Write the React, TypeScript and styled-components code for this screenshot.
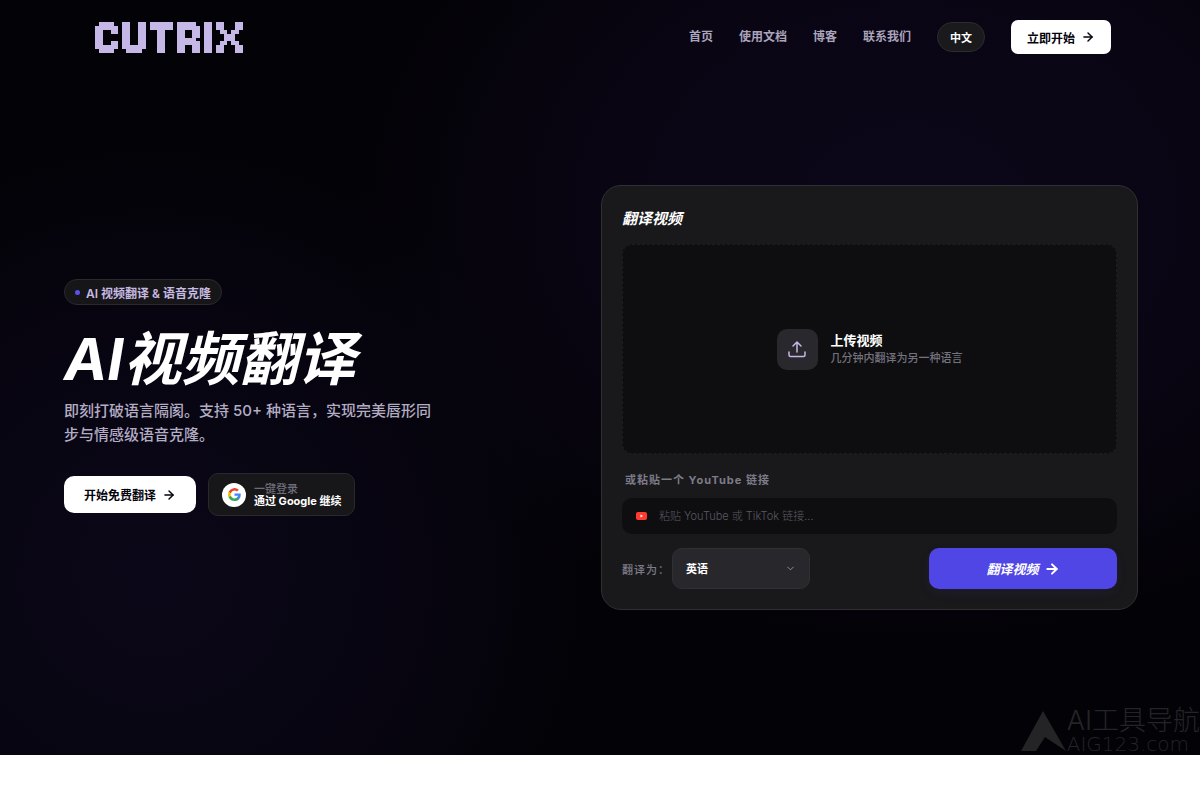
import React from "react";
import styled, { createGlobalStyle, css } from "styled-components";
import { ArrowRight, ChevronDown } from "lucide-react";

const GlobalStyle = createGlobalStyle`
  *, *::before, *::after { box-sizing: border-box; }
  body {
    margin: 0;
    background: #ffffff;
    color: #ffffff;
    font-family: Inter, "Noto Sans CJK SC", sans-serif;
    -webkit-font-smoothing: antialiased;
  }
  button, input, select { font-family: inherit; }
  h1, h2, p { margin: 0; }
`;

const Hero = styled.div`
  position: relative;
  overflow: hidden;
  background:
    radial-gradient(ellipse 560px 440px at 76% 28%, #0b0719 0%, #090513 55%, transparent 100%),
    radial-gradient(circle 440px at 13% 76%, #0b0718 0%, #080512 50%, transparent 100%),
    #030206;
`;

const Header = styled.header`
  display: flex;
  align-items: center;
  justify-content: space-between;
  height: 74px;
  padding: 0 89px 0 95px;
`;

const LogoLink = styled.a`
  display: block;
  line-height: 0;
`;

const Nav = styled.nav`
  display: flex;
  align-items: center;
  gap: 26px;
`;

const NavLink = styled.a`
  color: #aaa4bc;
  font-size: 12px;
  font-weight: 600;
  line-height: 20px;
  text-decoration: none;
`;

const LanguageButton = styled.button`
  height: 30px;
  padding: 0 12px;
  border: 1px solid #2c2c2f;
  border-radius: 15px;
  background: #1a1a1c;
  color: #ffffff;
  font-size: 11px;
  font-weight: 700;
`;

const LightButton = styled.button<{ $large?: boolean }>`
  display: flex;
  align-items: center;
  gap: 6px;
  height: ${(p) => (p.$large ? 37 : 34)}px;
  padding: 0 ${(p) => (p.$large ? 20 : 16)}px;
  border: 0;
  border-radius: ${(p) => (p.$large ? 10 : 7)}px;
  background: #ffffff;
  color: #05030b;
  font-size: 12px;
  font-weight: 600;
  white-space: nowrap;
`;

const Main = styled.main`
  display: grid;
  grid-template-columns: 1fr 1fr;
  align-items: center;
  padding: 111px 62px 145px 64px;
`;

const Intro = styled.section`
  display: flex;
  flex-direction: column;
  align-items: flex-start;
`;

const Badge = styled.p`
  display: flex;
  align-items: center;
  gap: 6px;
  height: 26px;
  padding: 0 10px;
  border: 1px solid #2a2a2d;
  border-radius: 13px;
  background: #161618;
  color: #c6bbe2;
  font-size: 12px;
  font-weight: 600;
`;

const Dot = styled.span`
  width: 5px;
  height: 5px;
  border-radius: 50%;
  background: #5b4ff0;
`;

const Headline = styled.h1`
  margin-top: 22px;
  font-size: 58px;
  font-style: italic;
  font-weight: 700;
  line-height: 64px;
  white-space: nowrap;
`;

const Lead = styled.p`
  max-width: 372px;
  margin-top: 8px;
  color: #b3adc4;
  font-size: 15px;
  font-weight: 500;
  line-height: 24px;
`;

const Actions = styled.div`
  display: flex;
  align-items: center;
  gap: 12px;
  margin-top: 26px;
`;

const GoogleButton = styled.button`
  display: flex;
  align-items: center;
  gap: 8px;
  height: 43px;
  padding: 0 13px;
  border: 1px solid #29292c;
  border-radius: 10px;
  background: #171719;
  color: #ffffff;
  text-align: left;
`;

const GoogleDisc = styled.span`
  display: grid;
  place-items: center;
  width: 24px;
  height: 24px;
  border-radius: 50%;
  background: #ffffff;
`;

const GoogleText = styled.span`
  display: flex;
  flex-direction: column;
  font-size: 11px;
  font-weight: 700;
  line-height: 12px;
  white-space: nowrap;
`;

const Faint = styled.span`
  color: #6e6c78;
  font-weight: 500;
`;

const Card = styled.form`
  padding: 20px;
  border: 1px solid #303033;
  border-radius: 20px;
  background: #19191b;
`;

const CardTitle = styled.h2`
  font-size: 15px;
  font-style: italic;
  font-weight: 700;
  line-height: 26px;
`;

const hiddenControl = css`
  position: absolute;
  width: 1px;
  height: 1px;
  opacity: 0;
`;

const DropZone = styled.label`
  position: relative;
  display: flex;
  align-items: center;
  justify-content: center;
  gap: 13px;
  height: 210px;
  margin-top: 12px;
  border: 1px dashed #1e1e21;
  border-radius: 10px;
  background: #0e0e10;
`;

const FileInput = styled.input`
  ${hiddenControl}
`;

const UploadTile = styled.span`
  display: grid;
  place-items: center;
  width: 41px;
  height: 41px;
  border-radius: 10px;
  background: #29292d;
`;

const UploadText = styled.span`
  display: flex;
  flex-direction: column;
  color: #74727e;
  font-size: 11px;
  font-weight: 500;
  line-height: 18px;
`;

const UploadTitle = styled.strong`
  color: #ffffff;
  font-size: 13px;
  font-weight: 700;
`;

const LinkLabel = styled.label`
  display: block;
  margin: 16px 0 8px 3px;
  color: #7e7b89;
  font-size: 11px;
  font-weight: 700;
  line-height: 20px;
  letter-spacing: 1px;
`;

const LinkField = styled.div`
  display: flex;
  align-items: center;
  gap: 12px;
  height: 36px;
  padding: 0 14px;
  border-radius: 10px;
  background: #0e0e10;
`;

const LinkInput = styled.input`
  flex: 1;
  min-width: 0;
  padding: 0;
  border: 0;
  outline: 0;
  background: transparent;
  color: #ffffff;
  font-size: 11px;
  font-weight: 300;
  &::placeholder { color: #5a5962; opacity: 1; }
`;

const SubmitRow = styled.div`
  display: flex;
  align-items: center;
  margin-top: 14px;
`;

const SelectLabel = styled.label`
  margin-right: 2px;
  color: #7e7b89;
  font-size: 11px;
  font-weight: 500;
  letter-spacing: 1px;
`;

const SelectBox = styled.div`
  display: grid;
  grid-template-columns: 1fr;
  align-items: center;
  width: 138px;
  & > * { grid-area: 1 / 1; }
  & > svg { justify-self: end; margin-right: 14px; pointer-events: none; }
`;

const Select = styled.select`
  appearance: none;
  width: 100%;
  height: 41px;
  padding: 0 13px;
  border: 1px solid #303034;
  border-radius: 10px;
  background: #28282c;
  color: #ffffff;
  font-size: 11px;
  font-weight: 700;
`;

const SubmitButton = styled.button`
  display: flex;
  align-items: center;
  justify-content: center;
  gap: 5px;
  width: 188px;
  height: 41px;
  margin-left: auto;
  border: 0;
  border-radius: 10px;
  background: #5046e5;
  box-shadow: 0 4px 12px rgba(80, 70, 229, 0.08);
  color: #ffffff;
  font-size: 13px;
  font-style: italic;
  font-weight: 700;
`;

const Watermark = styled.div`
  position: absolute;
  right: 0;
  bottom: 2px;
  display: flex;
  align-items: flex-end;
  color: #242427;
  white-space: nowrap;
`;

const WatermarkText = styled.div`
  display: flex;
  flex-direction: column;
  font-size: 27px;
  font-weight: 300;
  line-height: 28px;
`;

const WatermarkSite = styled.span`
  font-family: "DejaVu Sans", sans-serif;
  font-size: 20px;
  line-height: 18px;
`;

/* Each letter is eight rows of square blocks. */
const LOGO_ROWS = [
  ".####. ##..## ###### #####. ## ##...##",
  "###### ##..## ###### ###### ## ##...##",
  "##..## ##..## ..##.. ##..## ## .##.##.",
  "##.... ##..## ..##.. ##..## ## ..###..",
  "##.... ##..## ..##.. #####. ## ..###..",
  "##..## ##..## ..##.. ###### ## .##.##.",
  "###### ###### ..##.. ##..## ## ##...##",
  ".####. .####. ..##.. ##..## ## ##...##",
];

function Logo() {
  return (
    <svg width="148" height="31" viewBox="0 0 38 8" preserveAspectRatio="none" shapeRendering="crispEdges" role="img" aria-label="CUTRIX">
      {LOGO_ROWS.flatMap((row, y) =>
        [...row].map((cell, x) =>
          cell === "#" ? <rect key={`${x}-${y}`} x={x} y={y} width="1" height="1" fill="#c6b8e6" /> : null
        )
      )}
    </svg>
  );
}

function GoogleMark() {
  return (
    <svg width="13" height="13" viewBox="0 0 24 24" aria-hidden="true">
      <path fill="#4285f4" d="M23.5 12.3c0-.8-.1-1.6-.2-2.3H12v4.5h6.5a5.500 5.500 0 0 1-2.400 3.600v3h3.900c2.200-2.100 3.500-5.100 3.500-8.800z" />
      <path fill="#34a853" d="M12 24c3.200 0 6-1.100 8-2.900l-3.900-3a7.200 7.200 0 0 1-10.800-3.800H1.300v3.100A12 12 0 0 0 12 24z" />
      <path fill="#fbbc05" d="M5.300 14.300a7.200 7.200 0 0 1 0-4.600V6.600h-4a12 12 0 0 0 0 10.800z" />
      <path fill="#ea4335" d="M12 4.800c1.800 0 3.300.6 4.600 1.800L20 3.100A12 12 0 0 0 1.300 6.600l4 3.100A7.200 7.200 0 0 1 12 4.800z" />
    </svg>
  );
}

function UploadMark() {
  return (
    <svg width="20" height="20" viewBox="0 0 20 20" fill="none" stroke="#c6b8e6" strokeWidth="1.5" strokeLinecap="round" strokeLinejoin="round" aria-hidden="true">
      <path d="M10 13V3M6 7l4-4 4 4M2 13v3a1.500 1.500 0 0 0 1.500 1.500h13A1.500 1.500 0 0 0 18 16v-3" />
    </svg>
  );
}

function VideoMark() {
  return (
    <svg width="11" height="8" viewBox="0 0 11 8" aria-hidden="true">
      <rect width="11" height="8" rx="2" fill="#ff3b30" />
      <path d="M4.500 2.500v3l2.500-1.500z" fill="#ffffff" />
    </svg>
  );
}

export default function App() {
  return (
    <>
      <GlobalStyle />
      <Hero>
        <Header>
          <LogoLink href="#home"><Logo /></LogoLink>
          <Nav>
            <NavLink href="#home">首页</NavLink>
            <NavLink href="#docs">使用文档</NavLink>
            <NavLink href="#blog">博客</NavLink>
            <NavLink href="#contact">联系我们</NavLink>
            <LanguageButton type="button">中文</LanguageButton>
            <LightButton type="button">
              立即开始
              <ArrowRight size={14} strokeWidth={2.5} />
            </LightButton>
          </Nav>
        </Header>
        <Main>
          <Intro>
            <Badge><Dot />AI 视频翻译 &amp; 语音克隆</Badge>
            <Headline>AI视频翻译</Headline>
            <Lead>即刻打破语言隔阂。支持 50+ 种语言，实现完美唇形同步与情感级语音克隆。</Lead>
            <Actions>
              <LightButton type="button" $large>
                开始免费翻译
                <ArrowRight size={14} strokeWidth={2.5} />
              </LightButton>
              <GoogleButton type="button">
                <GoogleDisc><GoogleMark /></GoogleDisc>
                <GoogleText>
                  <Faint>一键登录</Faint>
                  <span>通过 Google 继续</span>
                </GoogleText>
              </GoogleButton>
            </Actions>
          </Intro>
          <Card onSubmit={(e) => e.preventDefault()}>
            <CardTitle>翻译视频</CardTitle>
            <DropZone>
              <FileInput type="file" accept="video/*" />
              <UploadTile><UploadMark /></UploadTile>
              <UploadText>
                <UploadTitle>上传视频</UploadTitle>
                几分钟内翻译为另一种语言
              </UploadText>
            </DropZone>
            <LinkLabel htmlFor="video-link">或粘贴一个 YouTube 链接</LinkLabel>
            <LinkField>
              <VideoMark />
              <LinkInput id="video-link" type="url" placeholder="粘贴 YouTube 或 TikTok 链接..." />
            </LinkField>
            <SubmitRow>
              <SelectLabel htmlFor="target-language">翻译为：</SelectLabel>
              <SelectBox>
                <Select id="target-language" defaultValue="en">
                  <option value="en">英语</option>
                </Select>
                <ChevronDown size={11} color="#96939f" />
              </SelectBox>
              <SubmitButton type="submit">
                翻译视频
                <ArrowRight size={16} strokeWidth={3} />
              </SubmitButton>
            </SubmitRow>
          </Card>
        </Main>
        <Watermark>
          <svg width="46" height="42" viewBox="0 0 46 42" aria-hidden="true">
            <path fill="currentColor" d="M0 40L22 0l23 40-21-14-9 14z" />
          </svg>
          <WatermarkText>
            AI工具导航
            <WatermarkSite>AIG123.com</WatermarkSite>
          </WatermarkText>
        </Watermark>
      </Hero>
    </>
  );
}
